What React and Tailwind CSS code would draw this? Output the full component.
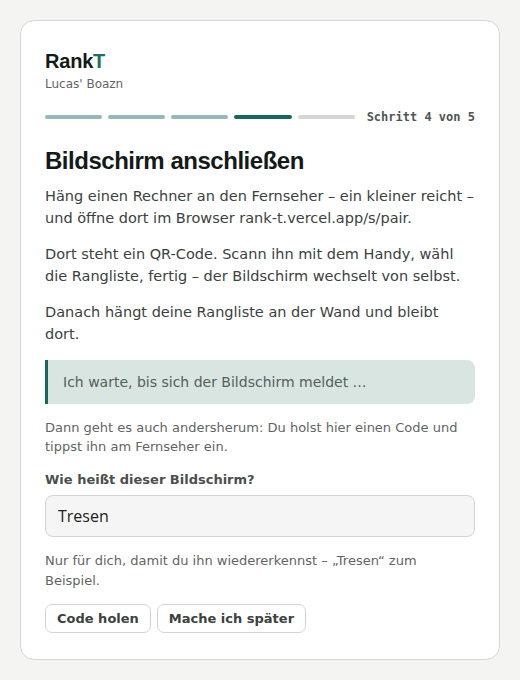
const STEPS = [1, 2, 3, 4, 5];
const CURRENT = 4;

export default function App() {
  return (
    <div className="min-h-screen bg-[#f4f4f3] p-5 font-['DejaVu_Sans',sans-serif]">
      <div className="rounded-[14px] border border-[#d6d6d6] bg-white px-6 pt-[28px] pb-[26px]">
        <div className="font-['Liberation_Sans',sans-serif] text-[20px] font-bold leading-6 tracking-[-0.01em] text-[#141a18]">
          Rank<span className="text-[#1b6f63]">T</span>
        </div>
        <div className="mt-[3px] text-[12px] leading-4 text-[#5f6563]">Lucas' Boazn</div>

        <div className="mt-[16px] flex items-center gap-[6px]">
          {STEPS.map((n) => (
            <div
              key={n}
              className={
                n < CURRENT
                  ? "h-[4px] w-[57px] rounded-full bg-[#93bab6]"
                  : n === CURRENT
                  ? "h-[4px] w-[58px] rounded-full bg-[#17675c]"
                  : "h-[4px] w-[57px] rounded-full bg-[#d5d7d6]"
              }
            />
          ))}
          <div className="ml-auto font-['DejaVu_Sans_Mono',monospace] text-[12px] font-bold text-[#4f5553]">
            Schritt 4 von 5
          </div>
        </div>

        <h1 className="mt-[19px] font-['Liberation_Sans',sans-serif] text-[24px] font-bold leading-8 tracking-[-0.02em] text-[#141a18]">
          Bildschirm anschließen
        </h1>

        <div className="mt-[8px] space-y-[14px] text-[14.5px] leading-[22px] text-[#3b4240]">
          <p>Häng einen Rechner an den Fernseher – ein kleiner reicht – und öffne dort im Browser rank-t.vercel.app/s/pair.</p>
          <p>Dort steht ein QR-Code. Scann ihn mit dem Handy, wähl die Rangliste, fertig – der Bildschirm wechselt von selbst.</p>
          <p>Danach hängt deine Rangliste an der Wand und bleibt dort.</p>
        </div>

        <div className="mt-[15px] flex h-[44px] items-center rounded-r-[8px] border-l-[3px] border-[#17675c] bg-[#d9e5e1] pl-[15px] text-[14px] text-[#55605c]">
          Ich warte, bis sich der Bildschirm meldet …
        </div>

        <p className="mt-[14px] text-[13px] leading-[19px] text-[#5f6563]">
          Dann geht es auch andersherum: Du holst hier einen Code und tippst ihn am Fernseher ein.
        </p>

        <label className="mt-[14px] block text-[13px] font-bold leading-[19px] text-[#4a504e]">
          Wie heißt dieser Bildschirm?
        </label>
        <input
          defaultValue="Tresen"
          className="mt-[6px] block h-[42px] w-full rounded-[8px] border border-[#d4d4d4] bg-[#f5f5f5] px-3 font-['Open_Sans',sans-serif] text-[16px] text-[#1d2220] outline-none"
        />

        <p className="mt-[14px] text-[13px] leading-[20px] text-[#5f6563]">
          Nur für dich, damit du ihn wiedererkennst – „Tresen“ zum Beispiel.
        </p>

        <div className="mt-[13px] flex gap-[6px]">
          <button className="h-[29px] rounded-[7px] border border-[#d4d4d4] bg-white px-[11px] text-[13px] font-bold text-[#3b4240]">
            Code holen
          </button>
          <button className="h-[29px] rounded-[7px] border border-[#d4d4d4] bg-white px-[11px] text-[13px] font-bold text-[#3b4240]">
            Mache ich später
          </button>
        </div>
      </div>
    </div>
  );
}
